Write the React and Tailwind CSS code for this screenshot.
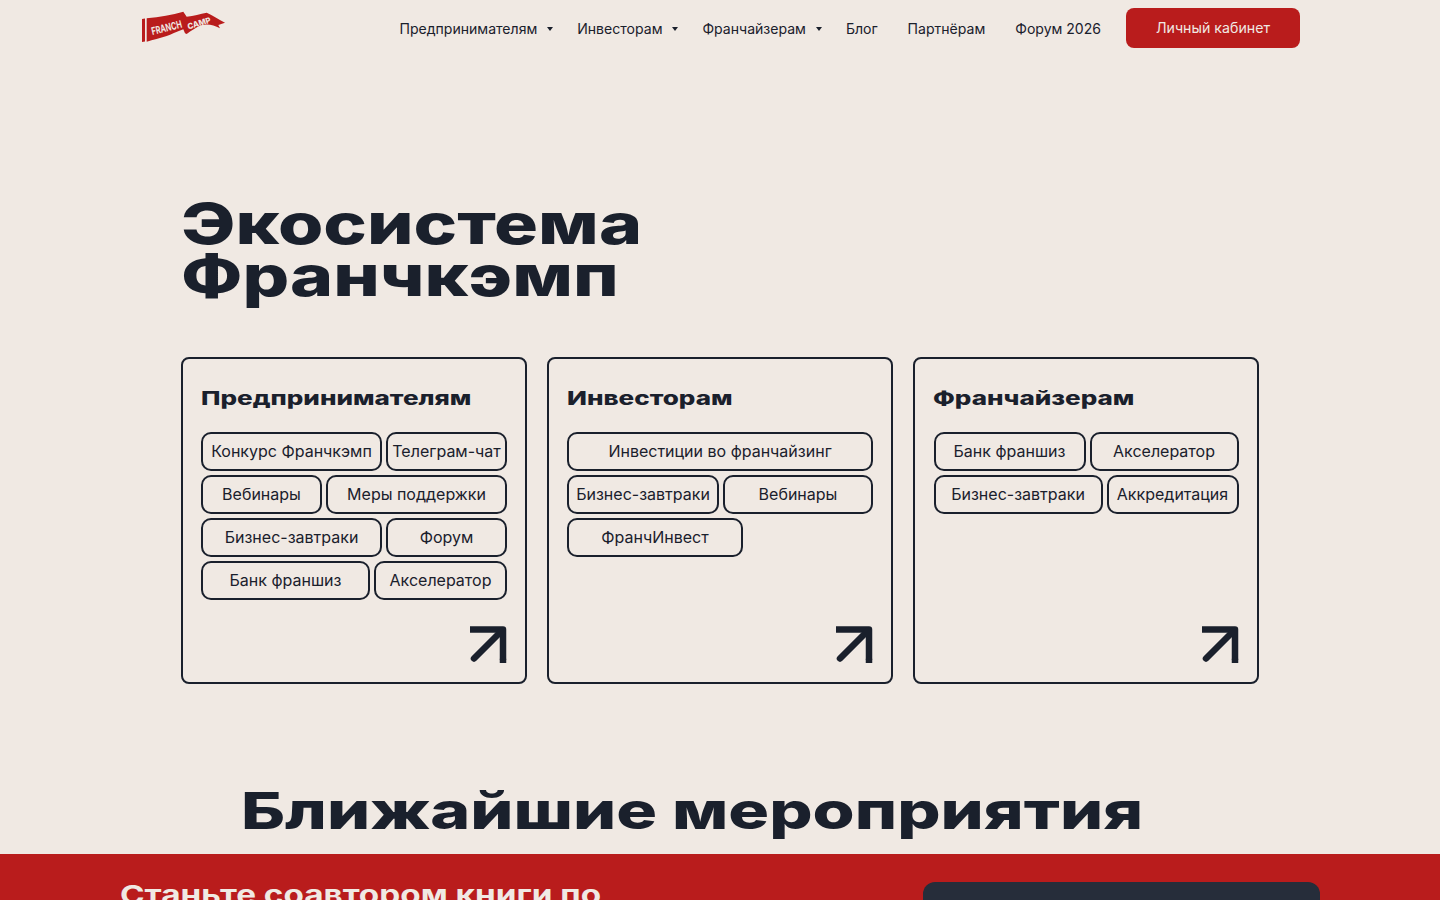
const cards = [
    {
        title: 'Предпринимателям',
        tags: [
            { label: 'Конкурс Франчкэмп', width: 'w-[181px]' },
            { label: 'Телеграм-чат', width: 'w-[121px]' },
            { label: 'Вебинары', width: 'w-[121px]' },
            { label: 'Меры поддержки', width: 'w-[181px]' },
            { label: 'Бизнес-завтраки', width: 'w-[181px]' },
            { label: 'Форум', width: 'w-[121px]' },
            { label: 'Банк франшиз', width: 'w-[169px]' },
            { label: 'Акселератор', width: 'w-[133px]' },
        ],
    },
    {
        title: 'Инвесторам',
        tags: [
            { label: 'Инвестиции во франчайзинг', width: 'w-[306px]' },
            { label: 'Бизнес-завтраки', width: 'w-[152px]' },
            { label: 'Вебинары', width: 'w-[150px]' },
            { label: 'ФранчИнвест', width: 'w-[176px]' },
        ],
    },
    {
        title: 'Франчайзерам',
        center: true,
        tags: [
            { label: 'Банк франшиз', width: 'w-[152px]' },
            { label: 'Акселератор', width: 'w-[149px]' },
            { label: 'Бизнес-завтраки', width: 'w-[169px]' },
            { label: 'Аккредитация', width: 'w-[132px]' },
        ],
    },
];

function Logo() {
    return (
        <svg width="86" height="36" viewBox="0 0 86 36" className="block">
            <path d="M2 11 L5 10.5 L5 33.5 L2 34 Z" fill="#b91c1c" />
            <path
                d="M6.7 10.3 C20 9 32 7 43.3 3.7 L46.7 8.7 C54 8 60 6 66.7 4.7 C72 7 78 11 85 14.7 L78.3 17 L80 20.3 C74 17 68 15.5 62 17 C56 19 51 23 46.7 26 L45 25.3 L43.3 21.3 C36 24 31 26.5 26.7 28 C20 30 13 32 6.7 33.7 Z"
                fill="#b91c1c"
            />
            <text x="12.5" y="27" fontFamily="Inter" fontSize="10.5" fontWeight="700" fill="#f0e9e3" transform="rotate(-14 12.5 27)" textLength="31" lengthAdjust="spacingAndGlyphs">
                FRANCH
            </text>
            <text x="48.5" y="21.5" fontFamily="Inter" fontSize="8" fontWeight="800" fill="#f0e9e3" transform="rotate(-17 48.5 21.5)" textLength="24" lengthAdjust="spacingAndGlyphs">
                CAMP
            </text>
        </svg>
    );
}

function NavLink({ children, caret }) {
    return (
        <a className="flex items-center text-[14.05px] leading-none text-[#1a202c] whitespace-nowrap">
            {children}
            {caret && <span className="ml-[10px] w-0 h-0 border-x-[3px] border-x-transparent border-t-[4px] border-t-[#1a202c]" />}
        </a>
    );
}

function Arrow() {
    return (
        <svg width="38" height="37" viewBox="0 0 38 37" fill="none" className="block">
            <path d="M1 3.5 H34 V34" stroke="#1a202c" strokeWidth="6.5" strokeLinejoin="round" />
            <path d="M34 34 V36.5 M33 4.5 L5 32.5" stroke="#1a202c" strokeWidth="6.5" strokeLinecap="round" />
        </svg>
    );
}

function Card({ card }) {
    return (
        <div className="flex flex-col justify-between w-[346px] h-[327px] border-2 border-[#1a202c] rounded-lg pt-[18px] pb-[19px] px-[18px]">
            <div>
                <div className="h-[39px] flex items-center pt-[6px]">
                    <h3 className="origin-left scale-x-[1.37] font-extrabold text-[19px] text-[#1a202c] whitespace-nowrap">{card.title}</h3>
                </div>
                <div className={`flex flex-wrap gap-1 mt-[16px] ${card.center ? 'justify-center' : ''}`}>
                    {card.tags.map((tag) => (
                        <span
                            key={tag.label}
                            className={`${tag.width} h-[39px] flex items-center justify-center border-2 border-[#1a202c] rounded-[10px] pb-[2px] text-base text-[#1a202c] whitespace-nowrap`}
                        >
                            {tag.label}
                        </span>
                    ))}
                </div>
            </div>
            <div className="flex justify-end">
                <Arrow />
            </div>
        </div>
    );
}

export default function App() {
    return (
        <div className="h-[900px] overflow-hidden flex flex-col bg-[#f0e9e3] font-[Inter,sans-serif]">
            <header className="flex items-start justify-between w-[1160px] mx-auto pt-2 shrink-0">
                <Logo />
                <nav className="flex items-center h-10">
                    <div className="flex items-center gap-6 pr-[25px] pt-[2px]">
                        <NavLink caret>Предпринимателям</NavLink>
                        <NavLink caret>Инвесторам</NavLink>
                        <NavLink caret>Франчайзерам</NavLink>
                        <div className="flex items-center gap-[30px]">
                            <NavLink>Блог</NavLink>
                            <NavLink>Партнёрам</NavLink>
                            <NavLink>Форум 2026</NavLink>
                        </div>
                    </div>
                    <button className="w-[174px] h-10 rounded-lg bg-[#b91c1c] text-[#f0e9e3] text-[14.2px]">Личный кабинет</button>
                </nav>
            </header>

            <main className="flex-1 w-[1078px] mx-auto pt-[150px]">
                <h1 className="origin-left scale-x-[1.31] font-extrabold text-[56px] leading-[52px] text-[#1a202c]">
                    Экосистема
                    <br />
                    Франчкэмп
                </h1>
                <div className="flex gap-5 mt-[55px]">
                    {cards.map((card) => (
                        <Card key={card.title} card={card} />
                    ))}
                </div>
                <h2 className="origin-left scale-x-[1.334] font-extrabold text-[51px] leading-none text-[#1a202c] whitespace-nowrap ml-[60px] mt-[101px]">
                    Ближайшие мероприятия
                </h2>
            </main>

            <section className="h-[46px] shrink-0 bg-[#b91c1c] overflow-hidden">
                <div className="flex justify-between w-[1200px] mx-auto pt-7">
                    <p className="origin-left scale-x-[1.28] font-bold text-[26px] leading-tight text-[#f0e9e3] whitespace-nowrap -mt-[3px]">Станьте соавтором книги по</p>
                    <div className="w-[397px] h-40 rounded-xl bg-[#262d3a]" />
                </div>
            </section>
        </div>
    );
}
